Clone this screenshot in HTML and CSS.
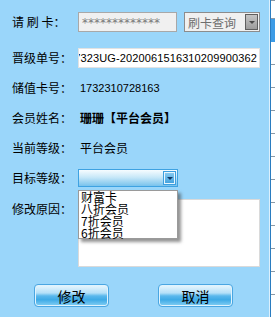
FILE: index.html
```html
<!DOCTYPE html>
<html lang="zh-CN">
<head>
    <meta charset="UTF-8">
    <title>会员晋级</title>
    <link rel="stylesheet" href="styles.css">
</head>
<body>
    <div class="frame">
        <div class="panel">
            <div class="row first">
                <span class="label">请&nbsp;刷&nbsp;卡：</span>
                <div class="card-input">*************</div>
                <div class="gray-select">
                    <span>刷卡查询</span>
                    <span class="gray-arrow"><i></i></span>
                </div>
            </div>
            <div class="row">
                <span class="label">晋级单号：</span>
                <div class="text-box"><span>17323UG-2020061516310209900362</span></div>
            </div>
            <div class="row">
                <span class="label">储值卡号：</span>
                <span class="value num">1732310728163</span>
            </div>
            <div class="row">
                <span class="label">会员姓名：</span>
                <span class="value bold">珊珊【平台会员】</span>
            </div>
            <div class="row">
                <span class="label">当前等级：</span>
                <span class="value">平台会员</span>
            </div>
            <div class="row">
                <span class="label">目标等级：</span>
                <div class="blue-select">
                    <span class="blue-arrow"><i></i></span>
                </div>
            </div>
            <div class="row reason">
                <span class="label">修改原因：</span>
                <div class="memo"></div>
            </div>
            <div class="buttons">
                <button class="btn">修改</button>
                <button class="btn">取消</button>
            </div>

            <ul class="droplist">
                <li>财富卡</li>
                <li>八折会员</li>
                <li>7折会员</li>
                <li>6折会员</li>
            </ul>
        </div>
        <div class="edge">
            <div class="edge-tab"></div>
        </div>
    </div>
</body>
</html>
```

FILE: styles.css
```css
body {
    margin: 0;
    font-family: "Noto Sans CJK SC", sans-serif;
    font-size: 12px;
    color: #000;
    background: #fff;
}
.frame {
    display: flex;
    height: 317px;
}
.panel {
    position: relative;
    width: 270px;
    border-right: 1px solid #dcf0fd;
    background: #9ad6fa;
    padding-top: 12px;
    box-sizing: border-box;
    display: flex;
    flex-direction: column;
    gap: 10px;
}
.row {
    display: flex;
    align-items: center;
    height: 20px;
    padding-left: 12px;
}
.row.first {
    margin-bottom: 6px;
}
.label {
    width: 66px;
    flex: none;
    line-height: 12px;
    white-space: nowrap;
}
.card-input {
    width: 99px;
    height: 20px;
    box-sizing: border-box;
    border: 1px solid #a8a8a8;
    background: #f0f0f0;
    color: #7a7a7a;
    font-family: "DejaVu Sans", sans-serif;
    font-size: 12px;
    line-height: 20px;
    padding-left: 3px;
    overflow: hidden;
}
.gray-select {
    margin-left: 7px;
    width: 76px;
    height: 20px;
    box-sizing: border-box;
    border: 1px solid #8c8c8c;
    background: #f0f0f0;
    color: #6e6e6e;
    display: flex;
    align-items: center;
    justify-content: space-between;
    padding: 0 1px 0 3px;
}
.gray-arrow {
    width: 13px;
    height: 16px;
    box-sizing: border-box;
    border: 1px solid #5e5e5e;
    background: linear-gradient(#c4c4c4, #9c9c9c);
    display: flex;
    align-items: center;
    justify-content: center;
}
.gray-arrow i,
.blue-arrow i {
    width: 0;
    height: 0;
    border-left: 3px solid transparent;
    border-right: 3px solid transparent;
    border-top: 3px solid #4a4a4a;
}
.text-box {
    width: 182px;
    height: 20px;
    box-sizing: border-box;
    border: 1px solid #e2e2e2;
    background: #fff;
    display: flex;
    justify-content: flex-end;
    align-items: center;
    overflow: hidden;
    padding-right: 2px;
    font-family: "Liberation Sans", sans-serif;
    font-size: 11px;
    letter-spacing: 0.12px;
    white-space: nowrap;
}
.value {
    padding-left: 2px;
    line-height: 12px;
}
.value.num {
    font-family: "Liberation Sans", sans-serif;
    font-size: 11px;
}
.value.bold {
    font-weight: bold;
}
.blue-select {
    width: 100px;
    height: 18px;
    box-sizing: border-box;
    border: 1px solid #3ea2e2;
    background: linear-gradient(#f6fcff, #c8e8f8 45%, #78c2ec);
    display: flex;
    justify-content: flex-end;
    align-items: center;
    padding-right: 1px;
}
.blue-arrow {
    width: 13px;
    height: 14px;
    box-sizing: border-box;
    border: 1px solid #3c9fe0;
    box-shadow: inset 0 0 0 1px #e8f6fe;
    background: linear-gradient(#8ccdf2, #3e9fdc);
    display: flex;
    align-items: center;
    justify-content: center;
}
.blue-arrow i {
    border-top-color: #123a66;
}
.row.reason {
    height: 68px;
    align-items: flex-start;
    margin-top: 1px;
}
.row.reason .label {
    padding-top: 4px;
}
.memo {
    width: 182px;
    height: 68px;
    box-sizing: border-box;
    border: 1px solid #dadada;
    background: #fff;
}
.buttons {
    display: flex;
    gap: 49px;
    padding-left: 34px;
    margin-top: 7px;
}
.btn {
    width: 75px;
    height: 23px;
    border: 1px solid #4aa6e2;
    border-radius: 4px;
    box-shadow: inset 0 0 0 1px #dff3fe;
    background: linear-gradient(#eaf7fe, #b4e0f8 38%, #5ab8ec 52%, #3eaae6 70%, #86d0f4);
    font-family: "Noto Sans CJK SC", sans-serif;
    font-size: 14px;
    color: #000;
    padding: 0;
    line-height: 20px;
}
.droplist {
    position: absolute;
    left: 78px;
    top: 190px;
    width: 100px;
    height: 49px;
    box-sizing: border-box;
    margin: 0;
    padding: 0 0 0 2px;
    list-style: none;
    background: #fff;
    border: 1px solid #9a9a9a;
    box-shadow: 3px 3px 3px rgba(60, 60, 60, 0.55);
}
.droplist li {
    height: 12px;
    line-height: 12px;
}
.edge {
    width: 4px;
    border-left: 1px solid #2a7cc0;
    background: repeating-linear-gradient(to bottom, #fff 0 22px, #8c9aa6 22px 23px) 0 42px;
}
.edge-tab {
    margin-top: 18px;
    height: 23px;
    border-top: 1px solid #8c9aa6;
    background: #3c9be6;
}
```
